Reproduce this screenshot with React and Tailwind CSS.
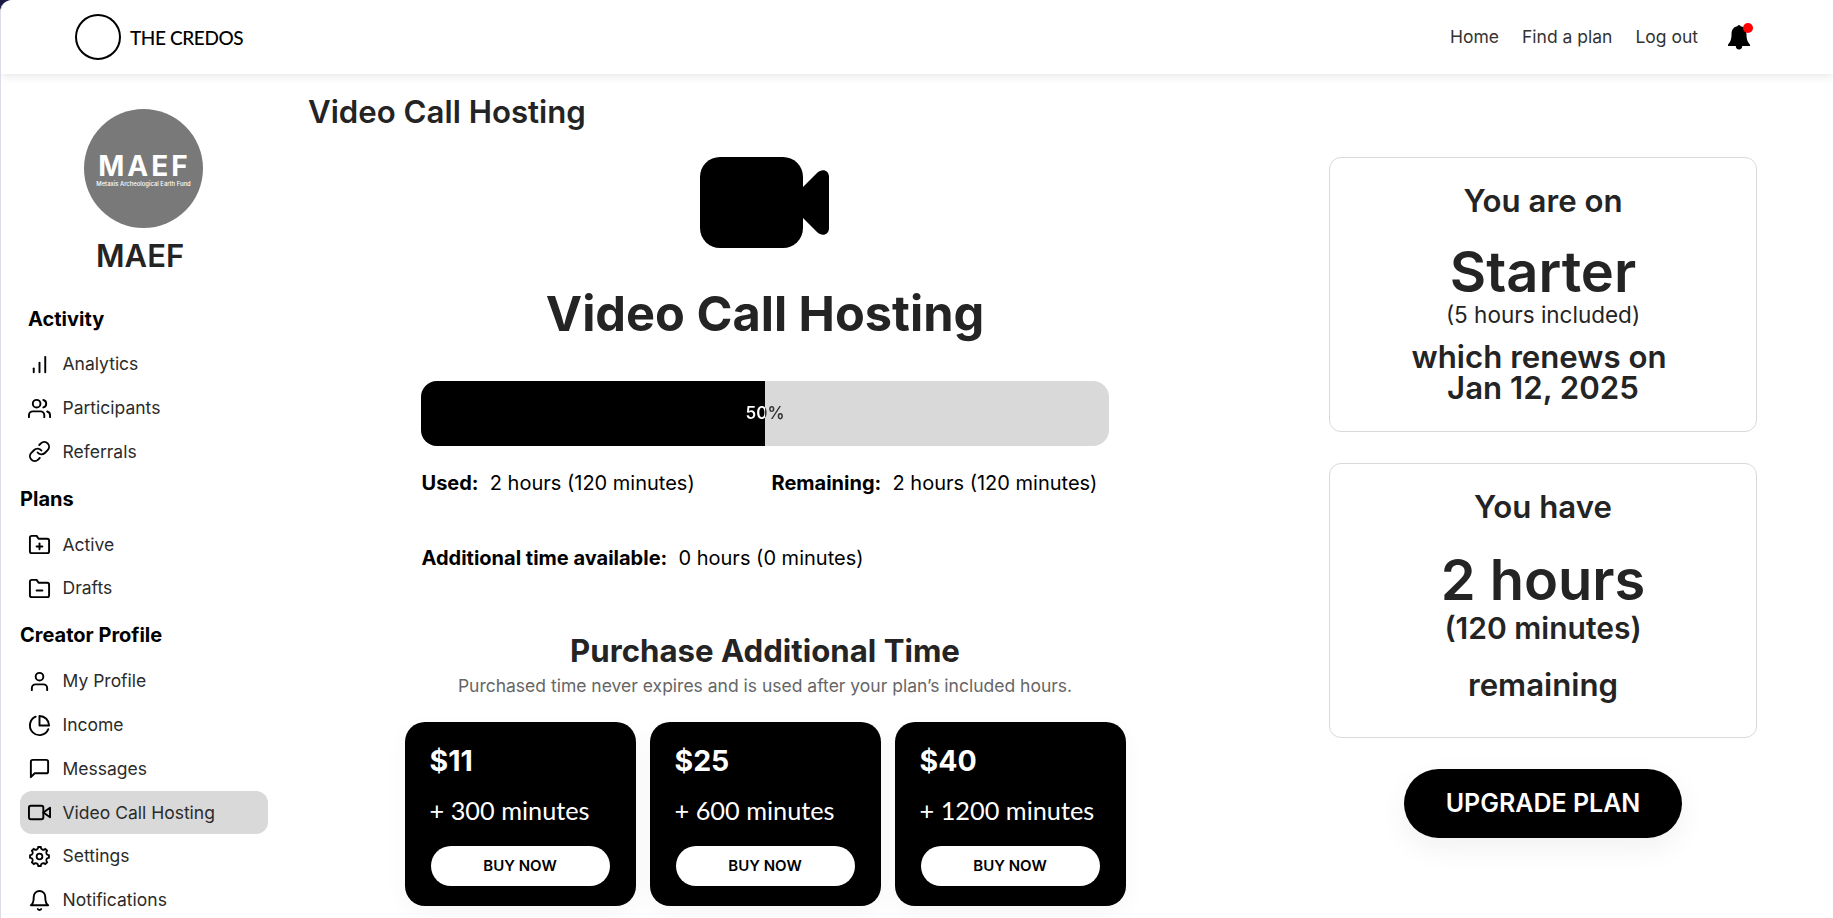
import React from 'react';
import {
  FiBarChart,
  FiUsers,
  FiLink,
  FiFolderPlus,
  FiFolderMinus,
  FiUser,
  FiPieChart,
  FiMessageSquare,
  FiVideo,
  FiBell
} from 'react-icons/fi';

const GearIcon = ({ className }) => (
  <svg
    viewBox="0 0 24 24"
    className={className}
    fill="none"
    stroke="currentColor"
    strokeWidth="1.9"
    strokeLinejoin="round"
  >
    <path d="M21.900 10.600v2.800a2.600 2.600 0 0 0-1.900 4.600l-2 2a2.600 2.600 0 0 0-4.600 1.900h-2.800a2.600 2.600 0 0 0-4.600-1.900l-2-2a2.600 2.600 0 0 0-1.900-4.600v-2.800a2.600 2.600 0 0 0 1.900-4.600l2-2a2.600 2.600 0 0 0 4.600-1.900h2.800a2.600 2.600 0 0 0 4.600 1.900l2 2a2.600 2.600 0 0 0 1.900 4.600z" />
    <circle cx="12" cy="12" r="3" />
  </svg>
);

const sections = [
  {
    title: 'Activity',
    titleClass: 'pl-2',
    items: [
      { label: 'Analytics', icon: FiBarChart },
      { label: 'Participants', icon: FiUsers },
      { label: 'Referrals', icon: FiLink }
    ]
  },
  {
    title: 'Plans',
    titleClass: '',
    items: [
      { label: 'Active', icon: FiFolderPlus },
      { label: 'Drafts', icon: FiFolderMinus }
    ]
  },
  {
    title: 'Creator Profile',
    titleClass: '',
    items: [
      { label: 'My Profile', icon: FiUser },
      { label: 'Income', icon: FiPieChart },
      { label: 'Messages', icon: FiMessageSquare },
      { label: 'Video Call Hosting', icon: FiVideo, active: true },
      { label: 'Settings', icon: GearIcon },
      { label: 'Notifications', icon: FiBell }
    ]
  }
];

const packs = [
  { price: '$11', minutes: 300 },
  { price: '$25', minutes: 600 },
  { price: '$40', minutes: 1200 }
];

const Header = () => (
  <header className="relative flex h-[74px] shrink-0 items-center justify-between rounded-tl-xl bg-white pl-[74px] pr-[79px] shadow-[0_2px_10px_rgba(0,0,0,0.1)]">
    <div className="flex items-center gap-[9px]">
      <div className="-mt-px size-[46px] rounded-full border-2 border-black" />
      <span className="font-['Lato'] text-[19px] font-medium leading-none tracking-[-0.4px] text-black">THE CREDOS</span>
    </div>
    <nav className="flex items-center gap-[23px] text-[17.5px] text-[#333]">
      <a>Home</a>
      <a>Find a plan</a>
      <a>Log out</a>
      <div className="relative ml-[5px] size-7">
        <svg viewBox="0 0 28 28" className="size-7" fill="black">
          <circle cx="13" cy="3.500" r="1.600" />
          <path d="M13 3c-5 0-7.500 3.500-7.500 8.500 0 5-1 7-3.500 10.300v1.200h22v-1.200C21.500 18.500 20.500 16.500 20.500 11.500c0-5-2.500-8.500-7.500-8.500z" />
          <path d="M9.800 23a3.200 3.400 0 0 0 6.400 0z" />
        </svg>
        <span className="absolute right-[1px] top-0 size-[10px] rounded-full bg-[#ff0000]" />
      </div>
    </nav>
  </header>
);

const Sidebar = () => (
  <aside className="w-[269px] shrink-0 pl-[19px]">
    <div className="ml-[64px] mt-[35px] flex size-[119px] flex-col items-center justify-center rounded-full bg-[#797979] text-white">
      <span className="-mr-[2px] mt-[2px] text-[28px] font-bold leading-[28px] tracking-[3px]">MAEF</span>
      <span className="whitespace-nowrap text-[5.9px] font-medium leading-[8px]">Metaxis Archeological Earth Fund</span>
    </div>
    <h2 className="mb-[18px] ml-[76px] mt-[8px] text-[31px] font-semibold leading-10 text-[#242424]">MAEF</h2>
    {sections.map((section) => (
      <div key={section.title}>
        <h3 className={`flex h-[49px] items-center text-[20px] font-bold text-black ${section.titleClass}`}>
          {section.title}
        </h3>
        <ul>
          {section.items.map(({ label, icon: Icon, active }) => (
            <li
              key={label}
              className={`mb-[1px] flex h-[42.8px] w-[248px] items-center gap-[11.5px] rounded-xl pl-2 text-[17.5px] text-[#2b2b2b] ${
                active ? 'bg-[#d9d9d9]' : ''
              }`}
            >
              <Icon className="size-[23px] text-black" />
              {label}
            </li>
          ))}
        </ul>
      </div>
    ))}
  </aside>
);

const ProgressBar = ({ percent }) => (
  <div className="relative mt-[37px] h-[65px] w-[688px] overflow-hidden rounded-[16px] bg-[#d9d9d9]">
    <div className="h-full bg-black" style={{ width: `${percent}%` }} />
    <span
      className="absolute inset-0 flex items-center justify-center bg-clip-text pt-px text-[17px] font-semibold text-transparent"
      style={{ backgroundImage: `linear-gradient(to right, #fff ${percent}%, #333 ${percent}%)` }}
    >
      {percent}%
    </span>
  </div>
);

const PackCard = ({ price, minutes }) => (
  <div className="h-[184px] w-[231px] rounded-[20px] bg-black pl-[25px] text-white shadow-[0_8px_24px_rgba(0,0,0,0.04)]">
    <p className="mt-[20px] text-[28.5px] font-bold leading-[38px]">{price}</p>
    <p className="mt-[13px] whitespace-nowrap font-['Lato'] text-[25.3px] leading-[34px]">+ {minutes} minutes</p>
    <button className="ml-[1px] mt-[19px] h-10 w-[179px] rounded-full bg-white pt-px text-[15px] font-semibold text-black">
      BUY NOW
    </button>
  </div>
);

const App = () => {
  return (
    <div className="h-[918px] overflow-hidden bg-[#1b1a45] font-['Inter',sans-serif]">
      <div className="flex h-full flex-col overflow-hidden rounded-tl-xl border-l border-[#dadde3] bg-white">
        <Header />
        <div className="flex flex-1">
          <Sidebar />

          <main className="ml-[37px] w-[916px] shrink-0">
            <h1 className="ml-px mt-[18px] text-[31.2px] font-semibold leading-10 text-[#242424]">Video Call Hosting</h1>
            <div className="flex flex-col items-center">
              <svg viewBox="0 0 129 91" className="mr-[2px] mt-[25px] h-[91px] w-[129px]" fill="black">
                <rect width="103" height="91" rx="20" />
                <path d="M102 31l15-15c5-5 12-3 12 4v51c0 7-7 9-12 4l-15-15z" />
              </svg>
              <h2 className="mt-[36px] text-[48.7px] font-bold leading-[60px] text-[#242424]">Video Call Hosting</h2>
              <ProgressBar percent={50} />
              <div className="mt-[22px] flex w-[687px] text-[20px] leading-[30px] text-black">
                <p className="w-[350px]"><b className="font-bold">Used:</b>&nbsp; 2 hours (120 minutes)</p>
                <p><b className="font-bold">Remaining:</b>&nbsp; 2 hours (120 minutes)</p>
              </div>
              <p className="mt-[45px] w-[687px] text-[20px] leading-[30px] text-black">
                <b className="font-bold">Additional time available:</b>&nbsp; 0 hours (0 minutes)
              </p>
              <h3 className="mt-[58px] text-[31.2px] font-bold leading-10 text-[#242424]">Purchase Additional Time</h3>
              <p className="mt-[2px] text-[17.5px] leading-[26px] text-[#666]">
                Purchased time never expires and is used after your plan’s included hours.
              </p>
              <div className="mt-[23px] flex gap-[14px]">
                {packs.map((pack) => (
                  <PackCard key={pack.price} {...pack} />
                ))}
              </div>
            </div>
          </main>

          <section className="ml-[106px] mt-[83px] flex w-[428px] flex-col items-center text-[31.2px] font-semibold text-[#242424]">
            <div className="h-[275px] w-full rounded-xl border border-[#d9d9d9] text-center">
              <p className="mt-[23px] leading-10">You are on</p>
              <p className="mt-[17px] text-[56px] leading-[68px]">Starter</p>
              <p className="-mt-px text-[22.5px] font-normal leading-[20px]">(5 hours included)</p>
              <p className="mt-[17px] leading-[31px]">which renews on&nbsp;<br />Jan 12, 2025</p>
            </div>
            <div className="mt-[31px] h-[275px] w-full rounded-xl border border-[#d9d9d9] text-center">
              <p className="mt-[23px] leading-10">You have</p>
              <p className="mt-[19px] text-[56px] leading-[68px]">2 hours</p>
              <p className="-mt-px text-[30px] leading-[30px]">(120 minutes)</p>
              <p className="mt-[22px] leading-10">remaining</p>
            </div>
            <button className="mt-[31px] h-[69px] w-[278px] rounded-full bg-black text-[25px] font-semibold text-white shadow-[0_10px_30px_rgba(0,0,0,0.06)]">
              UPGRADE PLAN
            </button>
          </section>
        </div>
      </div>
    </div>
  );
};

export default App;
